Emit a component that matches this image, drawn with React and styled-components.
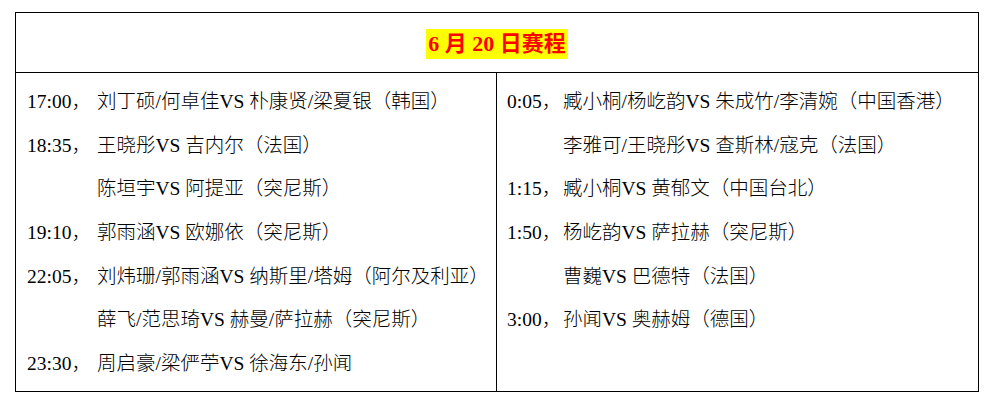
import React from "react";
import styled, { createGlobalStyle } from "styled-components";

const GlobalStyle = createGlobalStyle`
  html, body {
    margin: 0;
    padding: 0;
    background: #ffffff;
  }
  body {
    font-family: "Liberation Serif", "Noto Sans CJK SC", serif;
    color: #000000;
  }
`;

const leftGames = [
  { time: "17:00，", match: "刘丁硕/何卓佳VS 朴康贤/梁夏银（韩国）" },
  { time: "18:35，", match: "王晓彤VS 吉内尔（法国）" },
  { time: "", match: "陈垣宇VS 阿提亚（突尼斯）" },
  { time: "19:10，", match: "郭雨涵VS 欧娜依（突尼斯）" },
  { time: "22:05，", match: "刘炜珊/郭雨涵VS 纳斯里/塔姆（阿尔及利亚）" },
  { time: "", match: "薛飞/范思琦VS 赫曼/萨拉赫（突尼斯）" },
  { time: "23:30，", match: "周启豪/梁俨苧VS 徐海东/孙闻" },
];

const rightGames = [
  { time: "0:05，", match: "臧小桐/杨屹韵VS 朱成竹/李清婉（中国香港）" },
  { time: "", match: "李雅可/王晓彤VS 查斯林/寇克（法国）" },
  { time: "1:15，", match: "臧小桐VS 黄郁文（中国台北）" },
  { time: "1:50，", match: "杨屹韵VS 萨拉赫（突尼斯）" },
  { time: "", match: "曹巍VS 巴德特（法国）" },
  { time: "3:00，", match: "孙闻VS 奥赫姆（德国）" },
];

const Page = styled.div`
  padding: 12px 0 0 15px;
`;

const Schedule = styled.div`
  width: 964px;
  box-sizing: border-box;
  border: 1px solid #000000;
`;

const Header = styled.div`
  height: 59px;
  border-bottom: 1px solid #000000;
  display: flex;
  align-items: center;
  justify-content: center;
`;

const Title = styled.span`
  background: #ffff00;
  color: #ff0000;
  font-weight: 700;
  font-size: 22px;
  line-height: 30px;
  padding: 0 2px;
  margin-top: 2px;
`;

const Body = styled.div`
  display: grid;
  grid-template-columns: 481px 1fr;
  height: 318px;
`;

const Column = styled.div`
  padding: 7px 0 0 ${(p) => p.$pad}px;
  border-right: ${(p) => (p.$divider ? "1px solid #000000" : "none")};
`;

const Row = styled.div`
  display: flex;
  align-items: baseline;
  height: 43.67px;
  line-height: 43.67px;
  font-size: 19.5px;
  font-weight: 300;
  white-space: nowrap;
`;

const Time = styled.span`
  width: ${(p) => p.$w}px;
  flex: none;
`;

const Match = styled.span``;

const Games = ({ games, timeWidth }) =>
  games.map((g, i) => (
    <Row key={i}>
      <Time $w={timeWidth}>{g.time}</Time>
      <Match>{g.match.replace("VS ", "VS\u00a0")}</Match>
    </Row>
  ));

export default function App() {
  return (
    <>
      <GlobalStyle />
      <Page>
        <Schedule>
          <Header>
            <Title>6 月 20 日赛程</Title>
          </Header>
          <Body>
            <Column $pad={11} $divider>
              <Games games={leftGames} timeWidth={70} />
            </Column>
            <Column $pad={10}>
              <Games games={rightGames} timeWidth={56} />
            </Column>
          </Body>
        </Schedule>
      </Page>
    </>
  );
}
